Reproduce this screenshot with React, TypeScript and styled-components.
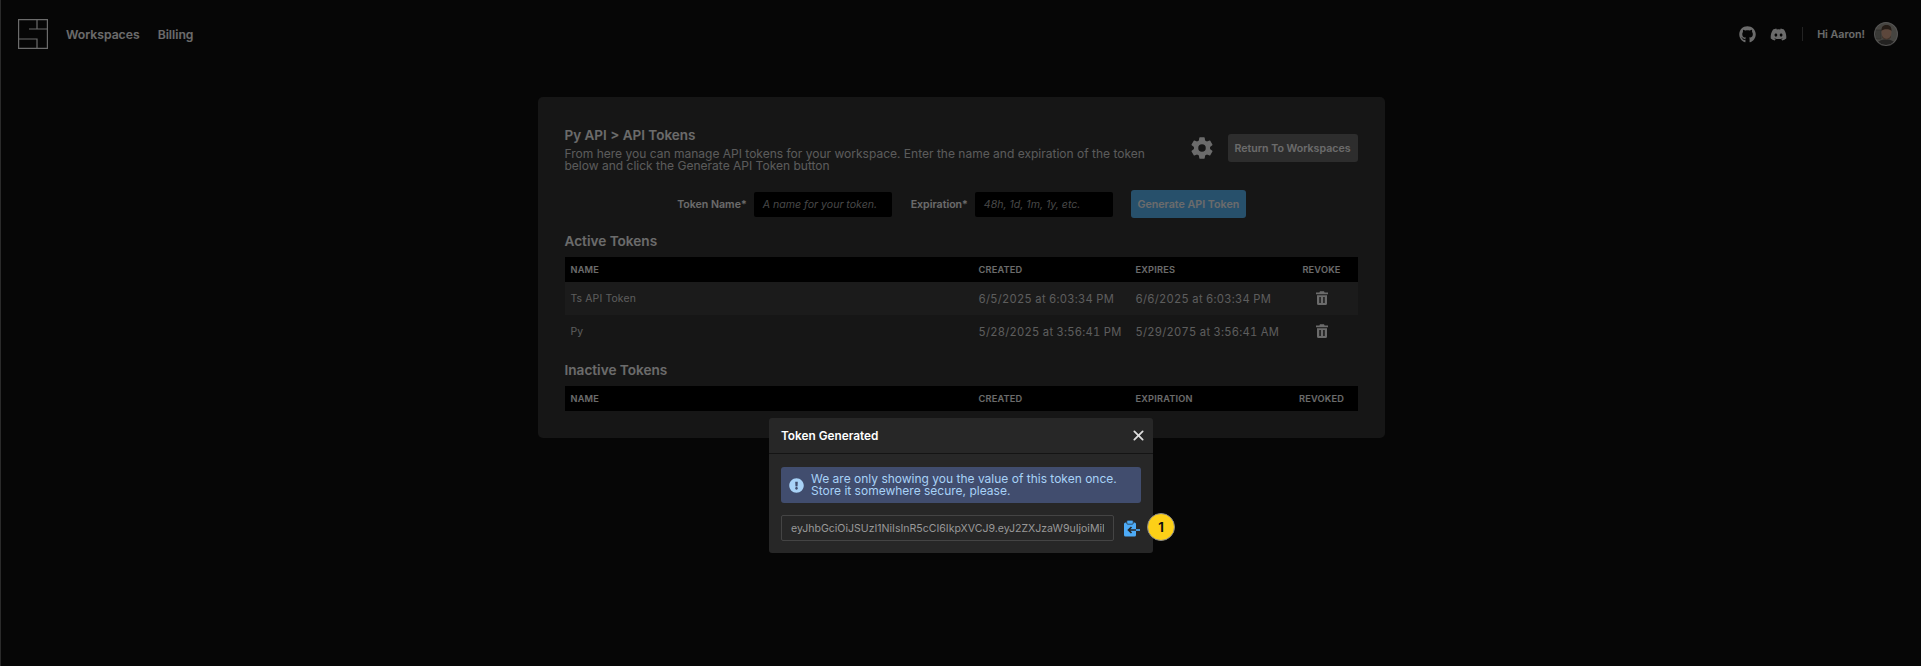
import styled, { createGlobalStyle } from "styled-components";
import { FaGithub, FaDiscord, FaExclamationCircle } from "react-icons/fa";
import { IoSettingsSharp, IoClose } from "react-icons/io5";

const GlobalStyle = createGlobalStyle`
  html, body {
    margin: 0;
    background: #0f0f0f;
    font-family: Inter, "Liberation Sans", sans-serif;
    color: #fff;
  }
  * { box-sizing: border-box; }
`;

const Page = styled.div`
  position: relative;
  height: 666px;
  overflow: hidden;
  border-left: 1px solid #2a2a2a;
`;

const TopBar = styled.header`
  display: flex;
  align-items: center;
  height: 68px;
  padding: 0 23px 0 17px;
`;

const NavLink = styled.a`
  font-size: 12.2px;
  font-weight: 600;
  margin-right: 18px;
  color: #fff;
`;

const Logo = styled.svg`
  width: 30px;
  height: 30px;
  margin-right: 18px;
  flex: none;
`;

const TopRight = styled.div`
  margin-left: auto;
  display: flex;
  align-items: center;
  font-size: 17px;
  gap: 14px;
  color: #fff;
`;

const Divider = styled.span`
  width: 1px;
  height: 14px;
  background: #555;
  margin: 0 0 0 1px;
`;

const Greeting = styled.span`
  font-size: 10.7px;
  font-weight: 600;
  margin-right: -5px;
`;

const Avatar = styled.svg`
  width: 24px;
  height: 24px;
  border-radius: 50%;
`;

const Card = styled.main`
  width: 847px;
  margin: 29px auto 0;
  padding: 29px 27px 27px;
  background: #353535;
  border-radius: 5px;
`;

const CardTop = styled.div`
  display: flex;
  align-items: center;
  justify-content: space-between;
`;

const Intro = styled.div`
  width: 600px;
`;

const Title = styled.h2`
  margin: 0;
  font-size: 13.5px;
  line-height: 18px;
  font-weight: 600;
  color: #fff;
`;

const Description = styled.p`
  margin: 4px 0 0;
  font-size: 12.03px;
  line-height: 12px;
  color: #d8d8d8;
`;

const CardActions = styled.div`
  display: flex;
  align-items: center;
  gap: 14px;
  margin-bottom: 2px;
  font-size: 24px;
  color: #fff;
`;

const GhostButton = styled.button`
  height: 28px;
  width: 130px;
  padding: 0;
  border: 0;
  border-radius: 3px;
  background: #6b6b6b;
  color: #fff;
  font: 600 10.6px Inter, sans-serif;
`;

const TokenForm = styled.form`
  display: flex;
  align-items: center;
  justify-content: center;
  margin-top: 18px;
  padding-left: 1px;
  height: 28px;
`;

const FieldLabel = styled.label`
  font-size: 10.6px;
  font-weight: 600;
  margin-right: 7px;
  color: #fff;
`;

const FieldInput = styled.div`
  width: 138px;
  height: 25px;
  margin-right: 19px;
  padding: 0 9px;
  background: #000;
  border-radius: 2px;
  font-size: 10.6px;
  font-style: italic;
  line-height: 25px;
  color: #aaa;
  white-space: nowrap;
`;

const PrimaryButton = styled.button`
  height: 28px;
  width: 115px;
  margin-left: -1px;
  padding: 0;
  border: 0;
  border-radius: 3px;
  background: #5dbeff;
  color: #fff;
  font: 600 10.7px Inter, sans-serif;
`;

const SectionTitle = styled.h3<{ $top: number; $bottom: number }>`
  margin: ${({ $top }) => $top}px 0 ${({ $bottom }) => $bottom}px;
  font-size: 13.6px;
  line-height: 18px;
  font-weight: 600;
  color: #fff;
`;

const TableRow = styled.div<{ $tint?: boolean }>`
  display: grid;
  grid-template-columns: 408px 157px 1fr 72px;
  align-items: center;
  height: 33px;
  font-size: 10.4px;
  letter-spacing: 0.15px;
  color: #ddd;
  background: ${({ $tint }) => ($tint ? "#404040" : "transparent")};
`;

const HeadRow = styled(TableRow)`
  height: 25px;
  background: #000;
  font-size: 9.2px;
  font-weight: 600;
  letter-spacing: 0.2px;
  text-transform: uppercase;
  color: #fff;
`;

const Cell = styled.div`
  padding-left: 6px;
`;

const DateCell = styled(Cell)`
  font-size: 11.2px;
  font-variant-numeric: tabular-nums;
  letter-spacing: 0.25px;
`;

const CenterCell = styled.div`
  display: flex;
  justify-content: center;
  white-space: nowrap;
`;

const TrashIcon = styled.svg`
  width: 12px;
  height: 14px;
  margin-bottom: 2px;
`;

const Backdrop = styled.div`
  position: absolute;
  inset: 0;
  background: rgba(0, 0, 0, 0.58);
  padding-top: 418px;
`;

const Modal = styled.section`
  position: relative;
  width: 384px;
  height: 135px;
  margin-left: 768px;
  background: #272727;
  border-radius: 3px;
`;

const ModalHeader = styled.div`
  display: flex;
  align-items: center;
  justify-content: space-between;
  height: 36px;
  padding: 0 5px 0 12px;
  border-bottom: 1px solid #141414;
  font-size: 11.8px;
  font-weight: 600;
  color: #fff;
`;

const CloseIcon = styled(IoClose)`
  font-size: 19px;
  color: #ddd;
`;

const ModalBody = styled.div`
  padding: 13px 12px;
`;

const Alert = styled.div`
  display: flex;
  align-items: center;
  gap: 7px;
  height: 36px;
  padding: 0 8px;
  background: #414d6e;
  border-radius: 3px;
  color: #a8d2f7;
  font-size: 12px;
  line-height: 12px;
`;

const AlertIcon = styled(FaExclamationCircle)`
  font-size: 15px;
  flex: none;
`;

const TokenRow = styled.div`
  display: flex;
  align-items: center;
  gap: 9px;
  margin-top: 12px;
`;

const TokenField = styled.input`
  width: 333px;
  height: 26px;
  padding: 0 9px;
  background: transparent;
  border: 1px solid #444;
  border-radius: 2px;
  outline: none;
  font: 400 10.55px Inter, sans-serif;
  color: #999;
`;

const CopyIcon = styled.svg`
  width: 18px;
  height: 18px;
  flex: none;
`;

const StepBadge = styled.div`
  position: absolute;
  left: 378px;
  top: 95px;
  width: 28px;
  height: 28px;
  display: flex;
  align-items: center;
  justify-content: center;
  border: 1.5px solid #8a8a8a;
  border-radius: 50%;
  background: #fdd017;
  color: #111;
  font-size: 13px;
  font-weight: 700;
`;

const activeTokens = [
  { name: "Ts API Token", created: "6/5/2025 at 6:03:34 PM", expires: "6/6/2025 at 6:03:34 PM" },
  { name: "Py", created: "5/28/2025 at 3:56:41 PM", expires: "5/29/2075 at 3:56:41 AM" },
];

function Trash() {
  return (
    <TrashIcon viewBox="0 0 12 14">
      <path
        fill="#fff"
        fillRule="evenodd"
        d="M4 .3h4l.6 1.200H12v1.700H0V1.500h3.400zM1 4.200h10v8.300a1.500 1.500 0 0 1-1.500 1.500h-7A1.500 1.500 0 0 1 1 12.500zM3.300 6v6h1.500V6zm3.900 0v6h1.500V6z"
      />
    </TrashIcon>
  );
}

export default function App() {
  return (
    <Page>
      <GlobalStyle />
      <TopBar>
        <Logo viewBox="0 0 30 30" fill="none" stroke="#fff" strokeWidth="1.2">
          <path d="M.6.6h28.8v28.8H.6zM19 .6V10M11 10h18.4M.6 20H19v9.4" />
        </Logo>
        <NavLink>Workspaces</NavLink>
        <NavLink>Billing</NavLink>
        <TopRight>
          <FaGithub />
          <FaDiscord />
          <Divider />
          <Greeting>Hi Aaron!</Greeting>
          <Avatar viewBox="0 0 24 24">
            <rect width="24" height="24" fill="#a8a49c" />
            <rect x="1" y="8" width="6" height="9" fill="#8b8a84" stroke="#66645f" strokeWidth="0.6" />
            <path d="M2 24c1-5 5-6.500 10-6.500s9 1.500 10 6.500z" fill="#55524f" />
            <ellipse cx="12.500" cy="10.500" rx="5" ry="6.800" fill="#dba98f" />
            <path d="M7.500 9c-.3-4.500 2-6 5-6s5.300 1.500 5 6c-1.500-2.500-8.500-2.500-10 0z" fill="#5a4436" />
            <path d="M8 13.500c1.800 4.200 7.200 4.200 9 0v2c-1.800 2.500-7.200 2.500-9 0z" fill="#9a7761" />
            <circle cx="12" cy="12" r="11.500" fill="none" stroke="#c9c9c9" strokeWidth="1" />
          </Avatar>
        </TopRight>
      </TopBar>

      <Card>
        <CardTop>
          <Intro>
            <Title>Py API &gt; API Tokens</Title>
            <Description>
              From here you can manage API tokens for your workspace. Enter the name and expiration of the token
              below and click the Generate API Token button
            </Description>
          </Intro>
          <CardActions>
            <IoSettingsSharp />
            <GhostButton type="button">Return To Workspaces</GhostButton>
          </CardActions>
        </CardTop>

        <TokenForm>
          <FieldLabel>Token Name*</FieldLabel>
          <FieldInput>A name for your token.</FieldInput>
          <FieldLabel>Expiration*</FieldLabel>
          <FieldInput>48h, 1d, 1m, 1y, etc.</FieldInput>
          <PrimaryButton type="button">Generate API Token</PrimaryButton>
        </TokenForm>

        <SectionTitle $top={14} $bottom={7}>Active Tokens</SectionTitle>
        <HeadRow>
          <Cell>Name</Cell>
          <Cell>Created</Cell>
          <Cell>Expires</Cell>
          <CenterCell>Revoke</CenterCell>
        </HeadRow>
        {activeTokens.map((token, i) => (
          <TableRow key={token.name} $tint={i === 0}>
            <Cell>{token.name}</Cell>
            <DateCell>{token.created}</DateCell>
            <DateCell>{token.expires}</DateCell>
            <CenterCell>
              <Trash />
            </CenterCell>
          </TableRow>
        ))}

        <SectionTitle $top={13} $bottom={7}>Inactive Tokens</SectionTitle>
        <HeadRow>
          <Cell>Name</Cell>
          <Cell>Created</Cell>
          <Cell>Expiration</Cell>
          <CenterCell>Revoked</CenterCell>
        </HeadRow>
      </Card>

      <Backdrop>
        <Modal>
          <ModalHeader>
            Token Generated
            <CloseIcon />
          </ModalHeader>
          <ModalBody>
            <Alert>
              <AlertIcon />
              <span>
                We are only showing you the value of this token once.
                <br />
                Store it somewhere secure, please.
              </span>
            </Alert>
            <TokenRow>
              <TokenField readOnly value="eyJhbGciOiJSUzI1NiIsInR5cCI6IkpXVCJ9.eyJ2ZXJzaW9uIjoiMiIsImlhdCI6MTc0OTE1" />
              <CopyIcon viewBox="0 0 18 18">
                <rect x="1" y="3.500" width="12" height="14" rx="1.500" fill="#4dabf7" />
                <rect x="3.800" y="1.200" width="6.400" height="4" rx="1" fill="#4dabf7" stroke="#272727" strokeWidth="0.7" />
                <path d="M13 11H5.500M8.500 8 5.500 11l3 3" fill="none" stroke="#272727" strokeWidth="1.700" />
                <path d="M13 11h4" fill="none" stroke="#4dabf7" strokeWidth="1.700" />
              </CopyIcon>
            </TokenRow>
          </ModalBody>
          <StepBadge>1</StepBadge>
        </Modal>
      </Backdrop>
    </Page>
  );
}
